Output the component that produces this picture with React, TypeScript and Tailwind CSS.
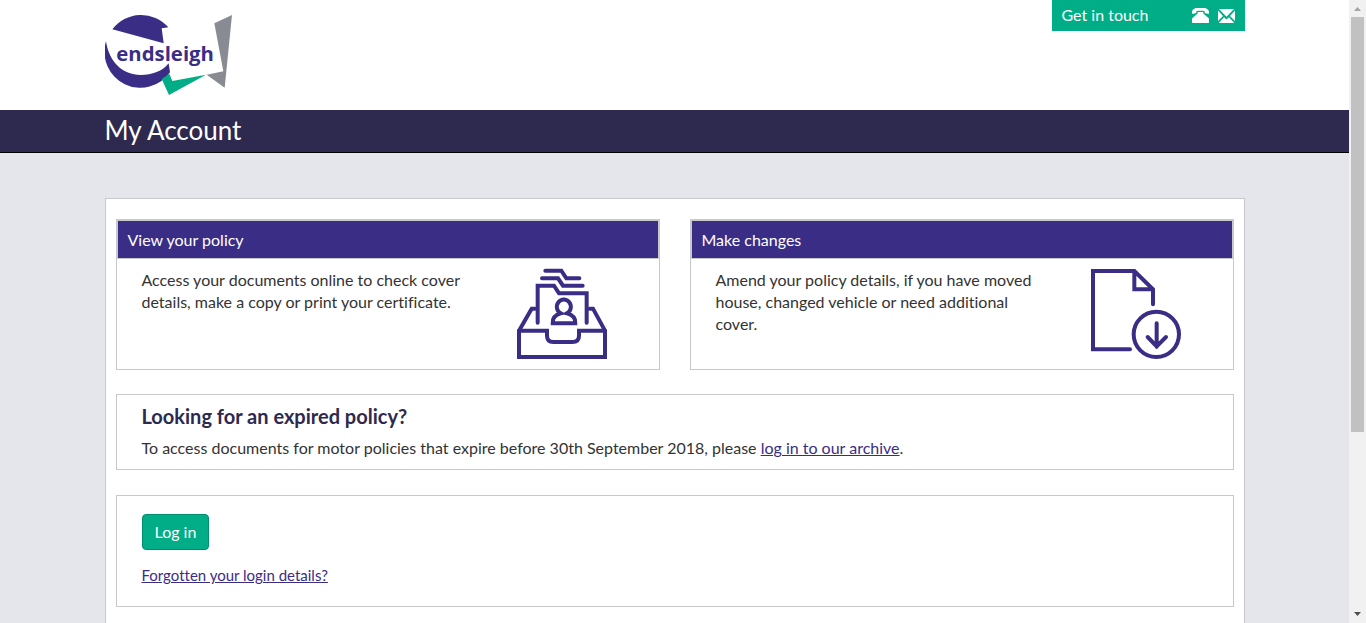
import type { ReactNode } from "react";

function Logo() {
  return (
    <svg width="128" height="82" viewBox="30 27 384 246" role="img" aria-label="endsleigh">
      <path d="M52 73A108 108 0 0 1 220 67L200 70L206 115z" fill="#3a2d86" />
      <path d="M33 109c9 62 50 101 104 101 34 0 66-11 84-35l4 27A108 108 0 0 1 33 109z" fill="#3a2d86" />
      <path d="M200 222L223 206L232 228L333 209L222 270z" fill="#00ad86" />
      <path d="M358 55L411 30L389 248L335 209L385 199z" fill="#888b91" />
      <text x="64" y="167" fontSize="61" fontWeight="700" fill="#3a2d86" fontFamily="'Open Sans', 'Noto Sans', sans-serif">
        endsleigh
      </text>
    </svg>
  );
}

function PhoneIcon() {
  return (
    <svg width="17" height="15" viewBox="0 0 17 15" fill="currentColor" aria-hidden="true">
      <path d="M0 4.500C0 1.500 2.500 0 5 0h7c2.500 0 5 1.500 5 4.500v.7c0 .4-.3.700-.7.600l-3-.5a.8.8 0 0 1-.6-.8V3.300C10 2.700 7 2.700 4.300 3.300v1.200c0 .4-.2.700-.6.800l-3 .5c-.4.1-.7-.2-.7-.6z" />
      <path d="M5.700 4h5.600v1.500L17 10.500V14.300c0 .4-.3.700-.7.700H.7c-.4 0-.7-.3-.7-.7V10.500l5.700-5z" />
    </svg>
  );
}

function MailIcon() {
  return (
    <svg width="17" height="14" viewBox="0 0 17 14" fill="currentColor" aria-hidden="true">
      <path d="M1 0h15L8.500 7.800zM0 1.500L5 7 0 12zM17 1.500v10.500L12 7zM6 8.200l2.500 2.300 2.500-2.300 5.300 5.800H.7z" />
    </svg>
  );
}

function ArchiveIcon() {
  return (
    <svg width="92" height="92" viewBox="48 24 276 276" fill="none" stroke="#3a2d86" strokeWidth="12" strokeLinecap="round" strokeLinejoin="miter" aria-hidden="true">
      <path d="M136 32h48l15 23h39M126 55h48l15 22h59M113 188V77h49l15 23h83v88" />
      <path d="M105 146h-10L57 212v79h258v-79l-36-66h-10" />
      <path d="M57 212h84v15q0 19 19 19h57q20 0 20-19v-15h78" />
      <path d="M158 190q-2-23 24-30a21 22 0 1 1 19 0q27 7 25 30z" />
    </svg>
  );
}

function DownloadIcon() {
  return (
    <svg width="92" height="92" viewBox="30 24 276 276" fill="none" stroke="#3a2d86" strokeWidth="12" strokeLinecap="round" aria-hidden="true">
      <path d="M150 268H39V33h124l56 55v45M163 33v55h56" />
      <circle cx="229" cy="223" r="68" />
      <path d="M230 190v70M203 231l27 28 28-28" />
    </svg>
  );
}

function Card({ title, text, icon }: { title: string; text: string; icon: ReactNode }) {
  return (
    <section className="flex-1 border border-[#c8c9cd]">
      <h2 className="border border-[#c8c9cd] bg-[#3a2d86] px-2.5 pt-2 pb-[7px] text-base leading-[22px] text-white">{title}</h2>
      <div className="flex items-start px-[25px] pt-[9px] pb-[9px]">
        <p className="min-w-0 flex-1 pt-px pr-12 leading-[22px]">{text}</p>
        <div className="mr-[26px]">{icon}</div>
      </div>
    </section>
  );
}

function ScrollTrack() {
  return (
    <div className="flex w-[17px] shrink-0 flex-col items-center bg-[#f1f1f1]" aria-hidden="true">
      <svg width="17" height="17" viewBox="0 0 17 17" fill="#a3a3a3">
        <path d="M5 11h7L8.500 7z" />
      </svg>
      <div className="w-[13px] flex-[415] bg-[#c1c1c1]" />
      <div className="flex-[174]" />
      <svg width="17" height="17" viewBox="0 0 17 17" fill="#505050">
        <path d="M5 6h7L8.500 10z" />
      </svg>
    </div>
  );
}

export default function App() {
  return (
    <div className="flex h-screen overflow-hidden font-['Lato',sans-serif] text-base text-[#333333] [font-variant-ligatures:none]">
      <div className="flex min-w-0 flex-1 flex-col overflow-hidden bg-[#e5e6eb]">
        <header className="shrink-0 bg-white">
          <div className="mx-auto flex h-[110px] max-w-[1140px] items-start justify-between">
            <a href="#home" className="mt-3.5 block">
              <Logo />
            </a>
            <a href="#contact" className="flex h-[31px] w-[193px] items-center bg-[#00ad86] px-2.5 text-white">
              <span className="flex-1 pb-0.5 leading-[22px]">Get in touch</span>
              <span className="flex items-center gap-[9px]">
                <PhoneIcon />
                <MailIcon />
              </span>
            </a>
          </div>
        </header>
        <div className="shrink-0 border-b border-black bg-[#2e294e]">
          <h1 className="mx-auto max-w-[1140px] pb-0.5 text-[26px] leading-10 text-white">My Account</h1>
        </div>
        <main className="mx-auto mt-[45px] w-full max-w-[1140px] flex-1 border-x border-t border-[#c8c9cd] bg-white px-2.5 pt-5">
          <div className="flex gap-[30px]">
            <Card
              title="View your policy"
              text="Access your documents online to check cover details, make a copy or print your certificate."
              icon={<ArchiveIcon />}
            />
            <Card
              title="Make changes"
              text="Amend your policy details, if you have moved house, changed vehicle or need additional cover."
              icon={<DownloadIcon />}
            />
          </div>
          <section className="mt-6 border border-[#c8c9cd] px-[25px] pt-[7px] pb-2.5">
            <h2 className="text-xl leading-7 font-bold text-[#2e294e]">Looking for an expired policy?</h2>
            <p className="mt-[7px] leading-[22px]">
              To access documents for motor policies that expire before 30th September 2018, please{" "}
              <a href="#archive" className="text-[#3a2d86] underline">log in to our archive</a>.
            </p>
          </section>
          <section className="mt-[25px] border border-[#c8c9cd] px-[25px] pt-[18px] pb-5">
            <button type="button" className="block rounded border border-[#008f6e] bg-[#00ad86] px-3 py-1.5 leading-[22px] text-white">
              Log in
            </button>
            <a href="#forgotten" className="mt-3.5 block w-fit text-[15px] leading-[22px] text-[#3a2d86] underline">
              Forgotten your login details?
            </a>
          </section>
        </main>
      </div>
      <ScrollTrack />
    </div>
  );
}
